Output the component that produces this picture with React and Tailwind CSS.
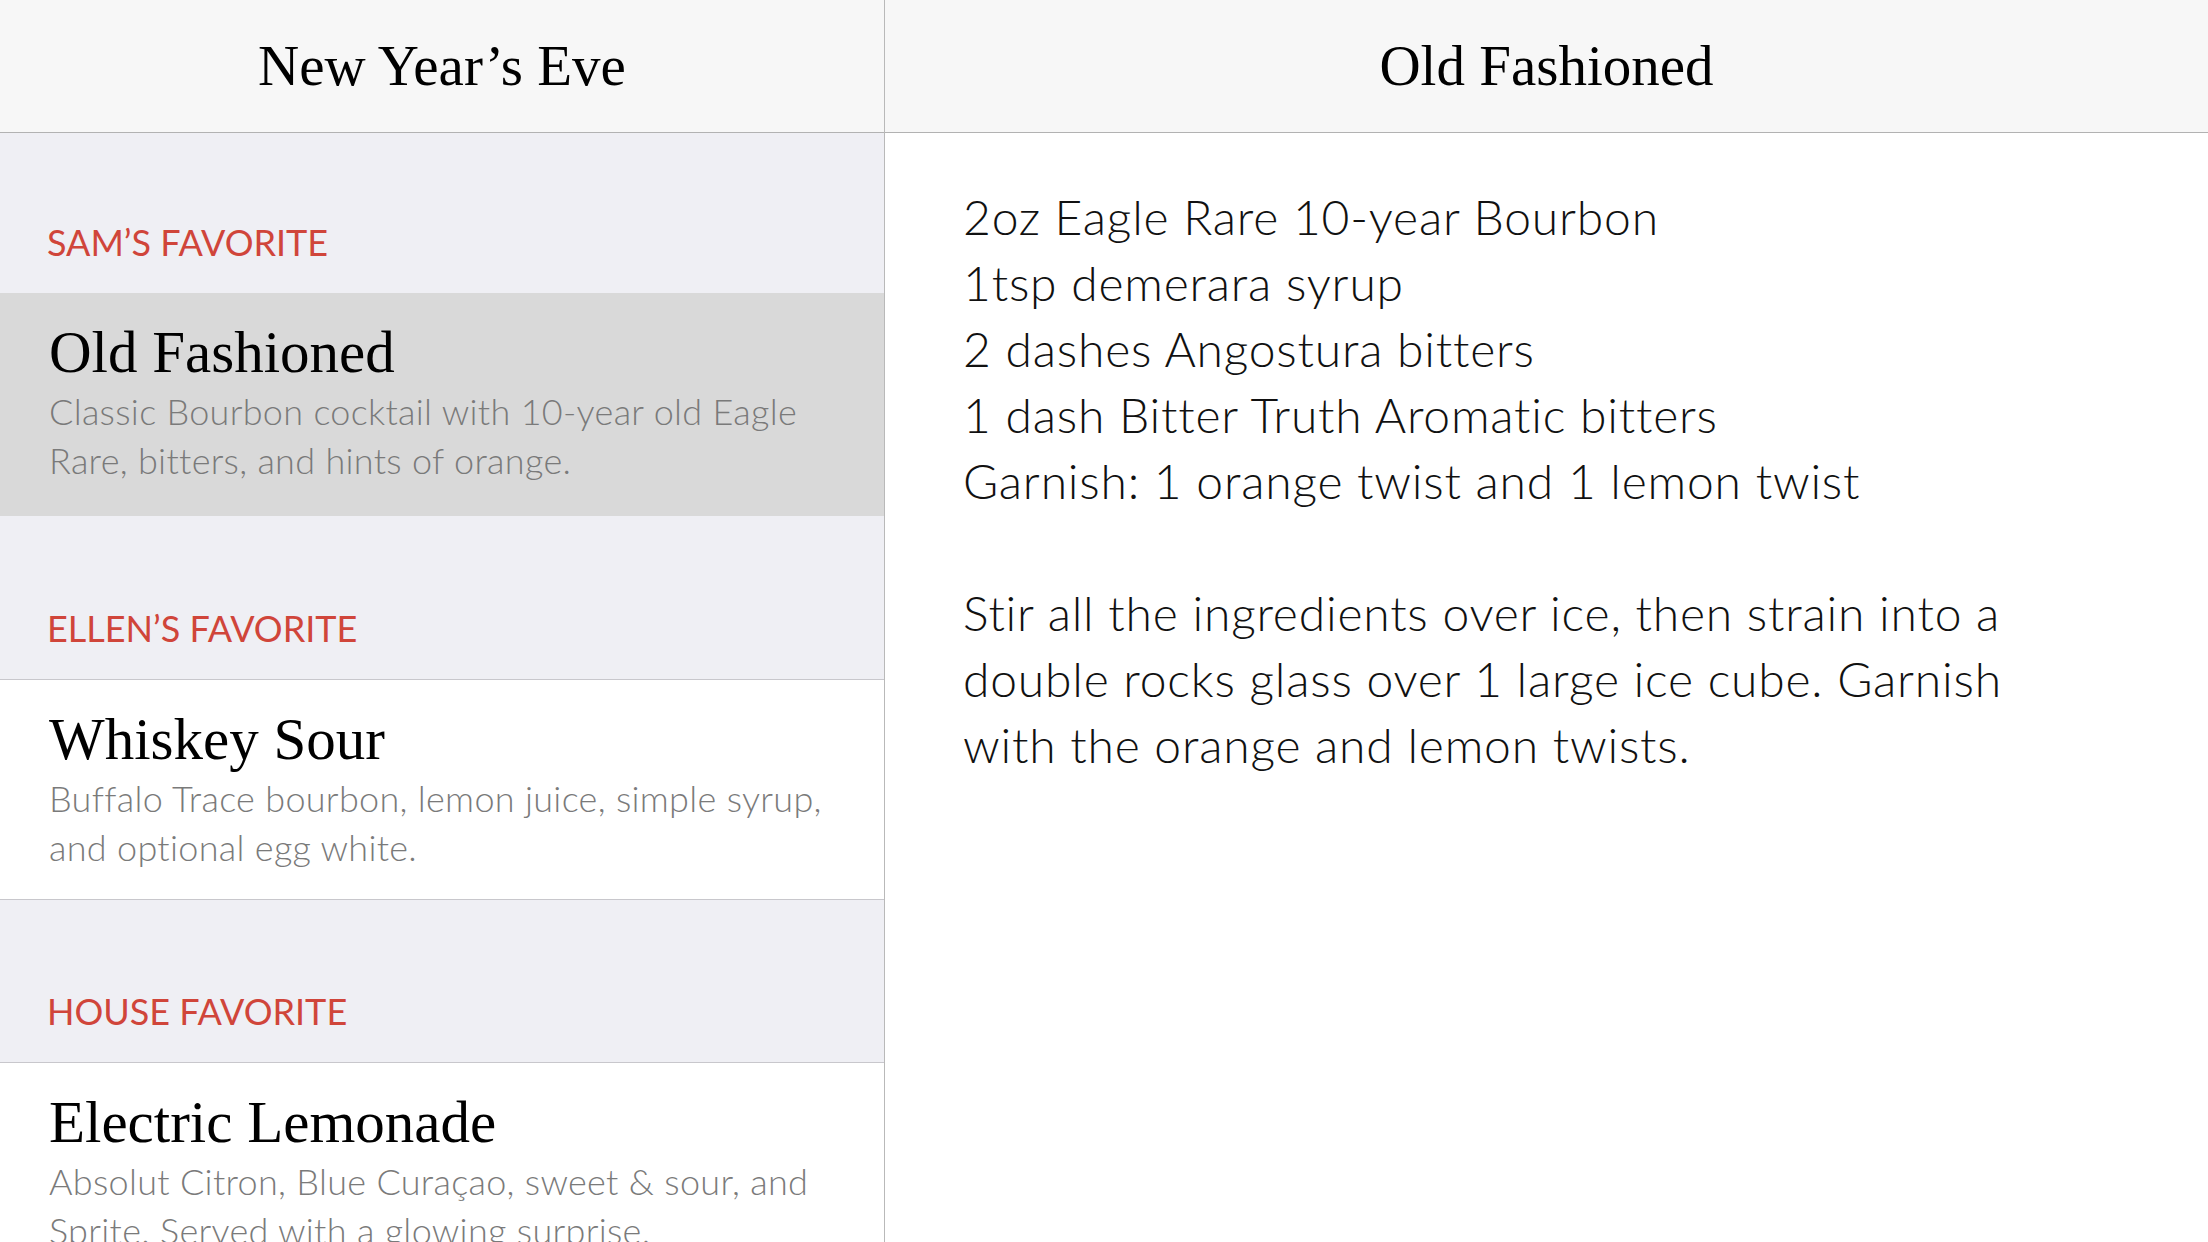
const serif = { fontFamily: '"Liberation Serif", "Times New Roman", serif' };

const drinks = [
  {
    section: "SAM’S FAVORITE",
    sectionClass: "h-[160px]",
    name: "Old Fashioned",
    lines: ["Classic Bourbon cocktail with 10-year old Eagle", "Rare, bitters, and hints of orange."],
    cellClass: "h-[223px] bg-[#d9d9d9]",
  },
  {
    section: "ELLEN’S FAVORITE",
    sectionClass: "h-[164px] border-b border-[#c8c7cc]",
    name: "Whiskey Sour",
    lines: ["Buffalo Trace bourbon, lemon juice, simple syrup,", "and optional egg white."],
    cellClass: "h-[220px] bg-white border-b border-[#c8c7cc]",
  },
  {
    section: "HOUSE FAVORITE",
    sectionClass: "h-[163px] border-b border-[#c8c7cc]",
    name: "Electric Lemonade",
    lines: ["Absolut Citron, Blue Curaçao, sweet & sour, and", "Sprite. Served with a glowing surprise."],
    cellClass: "h-[220px] bg-white",
  },
];

export default function App() {
  return (
    <main className="flex h-[1242px] w-[2208px] overflow-hidden bg-white font-['Lato',sans-serif] text-black">
      <aside className="flex w-[885px] shrink-0 flex-col border-r border-[#b9b9b9] bg-[#efeff4]">
        <Header title="New Year’s Eve" />

        <div className="flex flex-col">
          {drinks.map((drink) => (
            <div key={drink.name}>
              <div className={`flex items-end px-[47px] pb-[33px] ${drink.sectionClass}`}>
                <p className="text-[36px] leading-[36px] text-[#d0453a]">{drink.section}</p>
              </div>

              <div className={`px-[49px] pt-[27px] ${drink.cellClass}`}>
                <p style={serif} className="text-[59px] leading-[64px]">
                  {drink.name}
                </p>
                <p className="mt-[3px] text-[36px] font-light leading-[49px] tracking-[0.3px] text-[#7a7a7a]">
                  {drink.lines.map((line) => (
                    <span key={line} className="block whitespace-nowrap">
                      {line}
                    </span>
                  ))}
                </p>
              </div>
            </div>
          ))}
        </div>
      </aside>

      <section className="flex flex-1 flex-col">
        <Header title="Old Fashioned" />

        <div className="pl-[78px] pt-[51px] text-[48px] font-light leading-[66px] tracking-[0.8px] text-[#111]">
          <p>2oz Eagle Rare 10-year Bourbon</p>
          <p>1tsp demerara syrup</p>
          <p>2 dashes Angostura bitters</p>
          <p>1 dash Bitter Truth Aromatic bitters</p>
          <p>Garnish: 1 orange twist and 1 lemon twist</p>

          <p className="mt-[66px]">
            <span className="block">Stir all the ingredients over ice, then strain into a</span>
            <span className="block">double rocks glass over 1 large ice cube. Garnish</span>
            <span className="block">with the orange and lemon twists.</span>
          </p>
        </div>
      </section>
    </main>
  );
}

function Header({ title }) {
  return (
    <header className="flex h-[133px] shrink-0 items-center justify-center border-b border-[#b2b2b2] bg-[#f7f7f7]">
      <h1 style={serif} className="text-[57px] leading-[64px]">
        {title}
      </h1>
    </header>
  );
}
